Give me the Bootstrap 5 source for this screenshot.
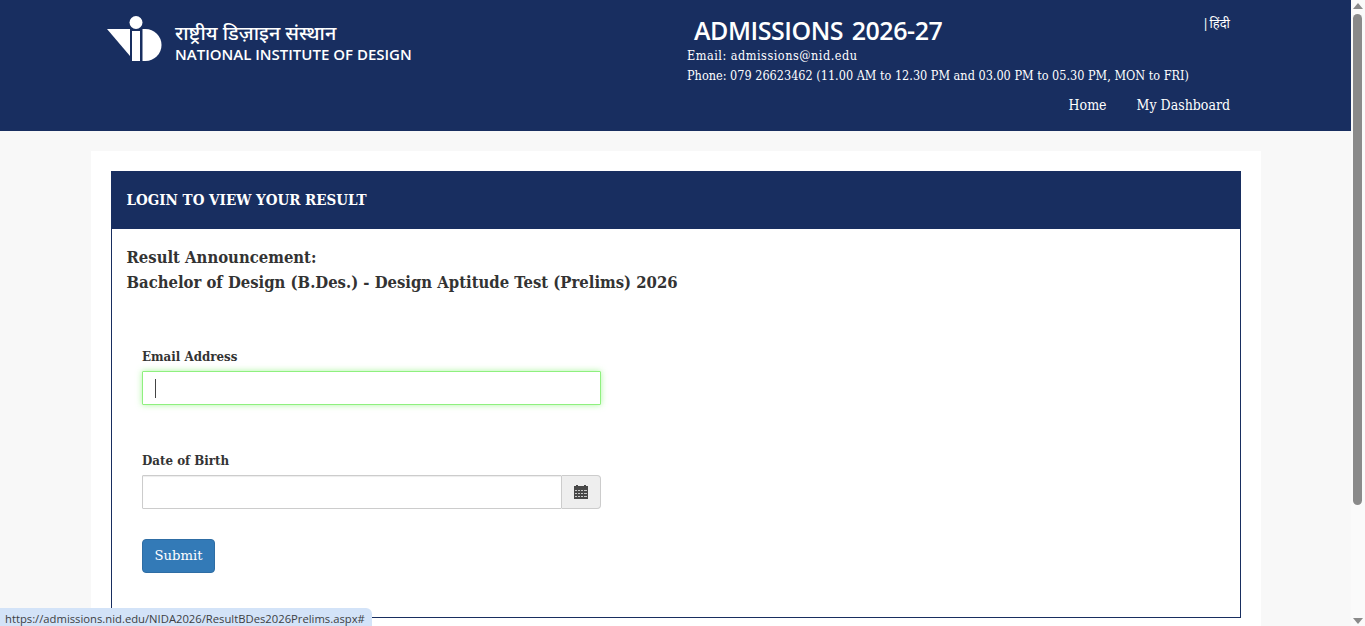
<!DOCTYPE html>
<html lang="en">
<head>
<meta charset="utf-8">
<title>Login to view your result</title>
<link href="https://cdn.jsdelivr.net/npm/bootstrap@5.3.0/dist/css/bootstrap.min.css" rel="stylesheet">
<style>
html,body{height:626px;overflow:hidden;}
body{background:#f8f8f8;color:#333;font-family:"DejaVu Serif","Liberation Serif",serif;font-stretch:condensed;font-size:14px;}
.page-shell{height:626px;}
.page-main{width:1351px;flex:none;overflow:hidden;}
.top-band{height:131px;background:#182e60;color:#fff;padding:0 121px 0 107px;}
.logo-wrap{gap:14px;padding-top:15px;}
.logo-hi{font-family:"Noto Sans","Noto Sans CJK SC",sans-serif;font-stretch:normal;font-size:19.8px;line-height:24px;font-weight:500;margin:6px 0 0 -1px;}
.logo-en{font-family:"Open Sans",sans-serif;font-stretch:normal;font-size:15px;font-weight:600;line-height:18px;white-space:nowrap;margin:0 0 0 -1px;}
.info-col{width:544px;position:relative;}
.adm-title{font-family:"Open Sans",sans-serif;font-stretch:normal;font-weight:600;font-size:25px;line-height:34px;margin:13px 0 0 8px;letter-spacing:-.45px;word-spacing:2.500px;}
.info-line{font-size:12.57px;line-height:20px;white-space:nowrap;padding-left:1px;}
.info-mail{letter-spacing:.5px;margin-top:-1px;}
.lang-link{position:absolute;top:14px;right:0;color:#fff;font-family:"Noto Sans",sans-serif;font-stretch:normal;font-size:13px;line-height:18px;text-decoration:none;word-spacing:-3px;}
.top-nav{gap:30px;margin-top:9px;}
.top-nav a{color:#fff;text-decoration:none;font-size:14px;line-height:20px;}
.sheet{width:1170px;margin:20px 0 0 91px;background:#fff;padding:20px;height:500px;}
.res-panel{height:447px;border:1px solid #182e60;border-top:0;}
.res-head{height:58px;background:#182e60;color:#fff;font-weight:700;font-size:15px;margin:0 -1px;padding:0 15.500px;}
.res-title{font-weight:700;font-size:16.5px;line-height:25px;margin:16px 0 0 14.500px;}
.form-area{width:459px;margin:52px 0 0 30px;}
.fld-label{font-weight:700;font-size:13.2px;line-height:20px;margin-bottom:4px;display:block;}
.fld-input{height:34px;border-radius:1px;border:1px solid #ccc;padding:6px 12px;box-shadow:inset 0 1px 1px rgba(0,0,0,.075);}
.fld-focus{border-color:#8ff07f;box-shadow:0 0 6px rgba(120,240,100,.6);}
.caret-mark{width:1px;height:19px;background:#444;}
.addon-box{width:39px;height:34px;background:#eee;border:1px solid #ccc;border-left:0;border-radius:0 4px 4px 0;}
.submit-btn{background:#337ab7;border:1px solid #2e6da4;color:#fff;border-radius:4px;font-size:13.2px;height:34px;line-height:20px;padding:6px 0;width:73px;}
.gap-one{margin-top:46px;}
.gap-two{margin-top:30px;}
.fake-bar{width:14px;flex:none;background:#fafafa;position:relative;}
.bar-thumb{position:absolute;top:14px;left:2px;width:9px;height:491px;background:#8a8a8a;border-radius:5px;}
.bar-up,.bar-down{position:absolute;left:2px;width:0;height:0;border-left:5px solid transparent;border-right:5px solid transparent;}
.bar-up{top:3px;border-bottom:6px solid #8a8a8a;}
.bar-down{bottom:2px;border-top:6px solid #8a8a8a;}
.status-tip{position:fixed;left:0;bottom:0;height:18px;width:372px;background:#d3e3f8;border-radius:0 6px 0 0;color:#3c4043;font-family:"Open Sans","Liberation Sans",sans-serif;font-stretch:normal;font-size:11.25px;line-height:21px;padding-left:5px;white-space:nowrap;}
</style>
</head>
<body>
<div class="page-shell d-flex">
  <div class="page-main">
    <header class="top-band d-flex justify-content-between">
      <div class="logo-wrap d-flex">
        <svg width="55" height="48" viewBox="107 14 55 48" aria-hidden="true"><path fill="#fff" d="M107 28h23v27z"/><circle fill="#fff" cx="136" cy="21.500" r="6.500"/><path fill="#fff" d="M132 30h8v30h-8z"/><path fill="#fff" d="M142.500 28h3a16 16 0 0 1 0 32h-3z"/></svg>
        <div>
          <div class="logo-hi">राष्ट्रीय डिज़ाइन संस्थान</div>
          <div class="logo-en">NATIONAL INSTITUTE OF DESIGN</div>
        </div>
      </div>
      <div class="info-col">
        <a class="lang-link" href="#">| हिंदी</a>
        <div class="adm-title">ADMISSIONS 2026-27</div>
        <div class="info-line info-mail">Email: admissions@nid.edu</div>
        <div class="info-line">Phone: 079 26623462 (11.00 AM to 12.30 PM and 03.00 PM to 05.30 PM, MON to FRI)</div>
        <nav class="top-nav d-flex justify-content-end">
          <a href="#">Home</a>
          <a href="#">My Dashboard</a>
        </nav>
      </div>
    </header>
    <main class="sheet">
      <section class="res-panel">
        <div class="res-head d-flex align-items-center">LOGIN TO VIEW YOUR RESULT</div>
        <div class="res-title">Result Announcement:<br>Bachelor of Design (B.Des.) - Design Aptitude Test (Prelims) 2026</div>
        <form class="form-area">
          <label class="fld-label">Email Address</label>
          <div class="fld-input fld-focus d-flex align-items-center bg-white"><span class="caret-mark"></span></div>
          <label class="fld-label gap-one">Date of Birth</label>
          <div class="d-flex">
            <div class="fld-input flex-grow-1 bg-white"></div>
            <div class="addon-box d-flex align-items-center justify-content-center">
              <svg width="14" height="14" viewBox="0 0 14 14" aria-hidden="true"><path fill="#484848" d="M0 1h2V0h2v1h6V0h2v1h2v13H0z"/><path fill="#c9c9c9" d="M1 5h2v1H1zM4 5h2v1H4zM7 5h2v1H7zM10 5h3v1h-3zM1 8h2v1H1zM4 8h2v1H4zM7 8h2v1H7zM10 8h3v1h-3zM1 11h2v1H1zM4 11h2v1H4zM7 11h2v1H7zM10 11h3v1h-3z"/></svg>
            </div>
          </div>
          <button type="button" class="btn submit-btn gap-two">Submit</button>
        </form>
      </section>
    </main>
  </div>
  <div class="fake-bar"><span class="bar-up"></span><span class="bar-thumb"></span><span class="bar-down"></span></div>
</div>
<div class="status-tip">https://admissions.nid.edu/NIDA2026/ResultBDes2026Prelims.aspx#</div>
<script src="https://cdn.jsdelivr.net/npm/bootstrap@5.3.0/dist/js/bootstrap.bundle.min.js"></script>
</body>
</html>
